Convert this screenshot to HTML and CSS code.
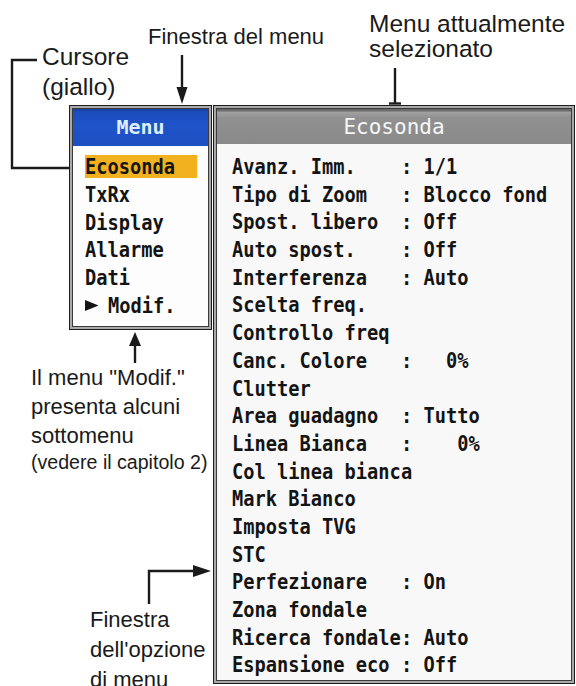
FILE: index.html
```html
<!DOCTYPE html>
<html lang="it">
<head>
<meta charset="utf-8">
<title>Menu Ecosonda</title>
<link rel="stylesheet" href="styles.css">
</head>
<body>
<div class="page">
  <div class="stage">
    <div class="win menu-win">
      <div class="win-inner">
        <div class="menu-head">Menu</div>
        <div class="menu-body">
          <div class="mono menu-list">
            <div class="menu-row"><span class="cursor">Ecosonda</span></div>
            <div class="menu-row"><span>TxRx</span></div>
            <div class="menu-row"><span>Display</span></div>
            <div class="menu-row"><span>Allarme</span></div>
            <div class="menu-row"><span>Dati</span></div>
            <div class="menu-row"><span><i class="tri"><svg width="16" height="11" viewBox="0 0 16 11"><polygon points="0,0 16,5.5 0,11" fill="#141414"/></svg></i>Modif.</span></div>
          </div>
        </div>
      </div>
    </div>
    <div class="win item-win">
      <div class="win-inner">
        <div class="item-head">Ecosonda</div>
        <div class="item-body">
          <div class="mono item-list">
            <div class="item-row">Avanz. Imm.    : 1/1</div>
            <div class="item-row">Tipo di Zoom   : Blocco fond</div>
            <div class="item-row">Spost. libero  : Off</div>
            <div class="item-row">Auto spost.    : Off</div>
            <div class="item-row">Interferenza   : Auto</div>
            <div class="item-row">Scelta freq.</div>
            <div class="item-row">Controllo freq</div>
            <div class="item-row">Canc. Colore   :   0%</div>
            <div class="item-row">Clutter</div>
            <div class="item-row">Area guadagno  : Tutto</div>
            <div class="item-row">Linea Bianca   :    0%</div>
            <div class="item-row">Col linea bianca</div>
            <div class="item-row">Mark Bianco</div>
            <div class="item-row">Imposta TVG</div>
            <div class="item-row">STC</div>
            <div class="item-row">Perfezionare   : On</div>
            <div class="item-row">Zona fondale</div>
            <div class="item-row">Ricerca fondale: Auto</div>
            <div class="item-row">Espansione eco : Off</div>
          </div>
        </div>
      </div>
    </div>
  </div>

  <svg class="leaders" width="576" height="686" viewBox="0 0 576 686">
    <g fill="none" stroke="#1a1a1a" stroke-width="2.4">
      <polyline points="37,60 12,60 12,168 69,168"/>
      <line x1="182" y1="55" x2="182" y2="90"/>
      <line x1="395" y1="68" x2="395" y2="104"/>
      <line x1="389" y1="103.5" x2="401" y2="103.5"/>
      <line x1="135" y1="344" x2="135" y2="363"/>
      <polyline points="149,604 149,571 195,571"/>
    </g>
    <g fill="#1a1a1a">
      <polygon points="176.5,87 187.5,87 182,104"/>
      <polygon points="129,346 141,346 135,332"/>
      <polygon points="193,565 193,577 211,571"/>
    </g>
  </svg>

  <p class="note note-cursor">Cursore<br>(giallo)</p>
  <p class="note note-window">Finestra del menu</p>
  <p class="note note-current">Menu attualmente<br>selezionato</p>
  <p class="note note-modif">Il menu "Modif."<br>presenta alcuni<br>sottomenu<span class="small">(vedere il capitolo 2)</span></p>
  <p class="note note-option">Finestra<br>dell'opzione<br>di menu</p>
</div>
</body>
</html>
```

FILE: styles.css
```css
* { box-sizing: border-box; }

html, body {
  margin: 0;
  padding: 0;
  background: #ffffff;
}

.page {
  position: relative;
  width: 576px;
  height: 686px;
  overflow: hidden;
  font-family: "Liberation Sans", Arial, sans-serif;
  color: #1a1a1a;
  background: #ffffff;
}

/* ---- screen windows ---- */
.stage {
  display: flex;
  align-items: flex-start;
  gap: 1px;
  padding: 105px 0 0 69px;
}

.win {
  border: 1px solid #1e1e1e;
  padding: 2px;
  background: #a9a9a9;
}

.win-inner {
  border: 1px solid #3a3a3a;
  overflow: hidden;
}

.menu-win { width: 143px; }
.item-win { width: 362px; }

.menu-head {
  height: 37px;
  background: linear-gradient(#173f9f 0, #1c4cbc 3px, #1f53c8 40%, #1d4fc2 100%);
  color: #dcefff;
  font-family: "DejaVu Sans Mono", monospace;
  font-weight: bold;
  font-size: 20px;
  line-height: 37px;
  text-align: center;
}

.item-head {
  height: 35px;
  background: linear-gradient(#6a6a6a 0, #6a6a6a 2px, #a2a2a2 3px, #909090 9px, #8a8a8a 100%);
  color: #f6f6f6;
  font-family: "DejaVu Sans Mono", monospace;
  font-size: 21px;
  line-height: 37px;
  text-align: center;
}

.mono {
  font-family: "DejaVu Sans Mono", monospace;
  font-weight: bold;
  font-size: 22px;
  color: #141414;
  transform: scaleX(0.85);
  transform-origin: 0 0;
}

.menu-body {
  background: #fdfdfd;
  padding: 6.6px 0 6.6px 12px;
}

.menu-row {
  height: 27.8px;
  display: flex;
  align-items: center;
}

.menu-row span {
  display: block;
  flex-shrink: 0;
  width: 132px;
  height: 23px;
  line-height: 23px;
  white-space: pre;
}

.menu-row .cursor {
  background: #f2b11e;
}

.tri {
  display: inline-block;
  width: 27px;
}

.tri svg {
  display: inline-block;
  vertical-align: 2px;
}

.item-body {
  background: #f8f8f8;
  padding: 9px 0 0.7px 15px;
}

.item-row {
  height: 27.7px;
  line-height: 27.7px;
  white-space: pre;
}

/* ---- callouts ---- */
.leaders {
  position: absolute;
  left: 0;
  top: 0;
}

.note {
  position: absolute;
  margin: 0;
  font-size: 22px;
  line-height: 26px;
  white-space: nowrap;
  color: #1a1a1a;
}

.note-cursor {
  left: 42px;
  top: 41.5px;
  font-size: 24.5px;
  line-height: 30px;
}

.note-window {
  left: 148px;
  top: 24.4px;
}

.note-current {
  left: 369px;
  top: 10.7px;
  font-size: 24.5px;
  line-height: 25px;
}

.note-modif {
  left: 31px;
  top: 362.9px;
  line-height: 29px;
}

.note-modif .small {
  display: block;
  font-size: 19.6px;
  line-height: 25px;
}

.note-option {
  left: 90px;
  top: 605px;
  line-height: 30px;
}
```
